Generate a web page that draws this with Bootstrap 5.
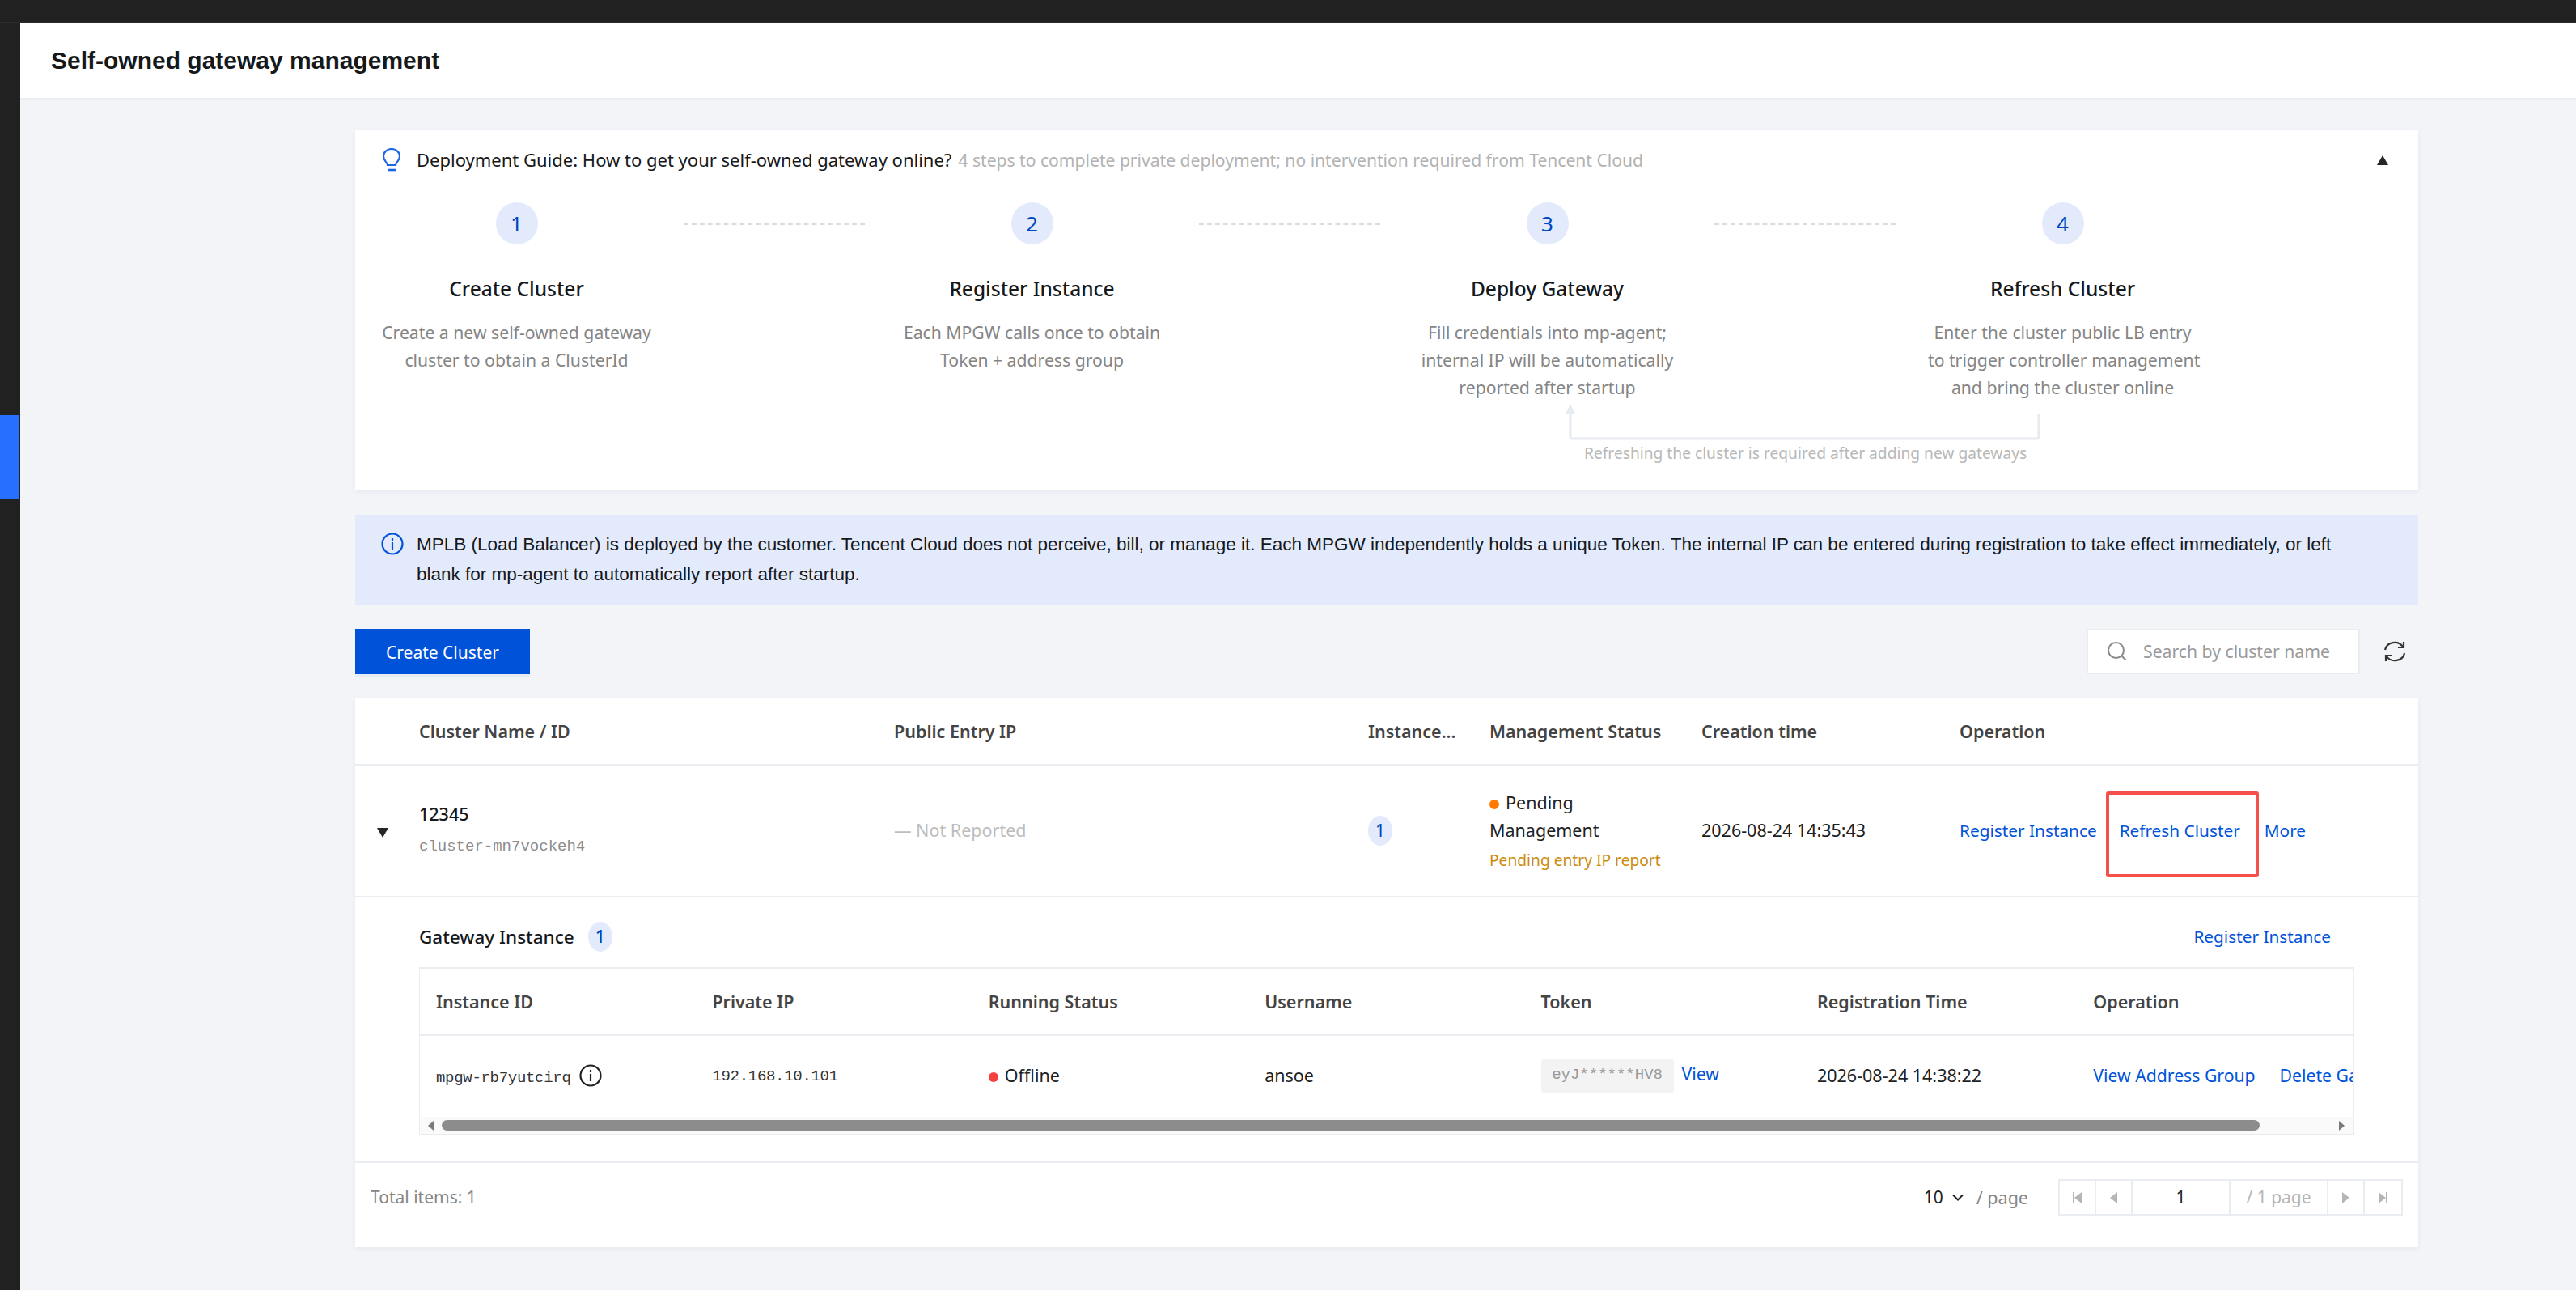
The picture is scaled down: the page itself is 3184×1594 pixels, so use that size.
<!doctype html>
<html lang="en"><head><meta charset="utf-8"><title>Self-owned gateway management</title>
<link rel="stylesheet" href="https://cdn.jsdelivr.net/npm/bootstrap@5.3.0/dist/css/bootstrap.min.css">
<style>
html,body{height:100%}
body{background:#f2f4f8;font-family:"Noto Sans",sans-serif;font-size:21px;color:#1f1f1f;overflow:hidden}
.top-strip{height:29px;background:#212121;border-bottom:2px solid #2b2b2b}
.shell{height:1565px}
.side-rail{width:25px;background:#212121;flex:none}
.side-mark{height:104px;margin-top:484px;background:#266fff;margin-right:1px}
.page-head{height:94px;background:#fff;border-bottom:2px solid #e9ecf1;padding-left:38px;font:700 30px "Liberation Sans",sans-serif;color:#16181a}
.page-body{padding:38px 195px 0 414px}
.guide{background:#fff;height:445px;box-shadow:0 2px 6px rgba(30,50,90,.06);padding-left:33px}
.guide-head{height:76px;padding-bottom:3px}
.guide-head svg{margin-right:19px}
.guide-title{color:#16181a;margin-right:8px;font-size:22px}
.guide-sub{color:#b3b3b3;font-size:21.1px}
.guide-caret{margin-left:auto;margin-right:37px;width:0;height:0;border-left:7.5px solid transparent;border-right:7.5px solid transparent;border-bottom:12px solid #262626}
.flow-step{width:333px;text-align:center;flex:none}
.flow-num{width:52px;height:52px;background:#e2eafc;color:#0046c0;font-size:26px;margin:13px auto 0}
.flow-title{font-size:24.5px;font-weight:500;color:#16181a;margin-top:36px;line-height:38px}
.flow-desc{color:#858585;font-size:21.2px;line-height:34px;margin-top:18px;white-space:nowrap}
.flow-dash{width:224px;flex:none;margin:39px 40px 0;border-top:2px dashed #dcdcdc;height:0}
.loop-wrap{margin-left:1461px;margin-top:3px}
.loop-note{font-size:19.2px;color:#b8b8b8;margin:2px 0 0 25px;line-height:26px;white-space:nowrap}
.notice{background:#e2eafc;height:111px;margin-top:30px;padding:18px 100px 0 32px;font:22.5px/37px "Liberation Sans",sans-serif;color:#16181a}
.notice svg{flex:none;margin-top:4px;margin-right:16px}
.tools{margin-top:30px;height:56px}
.make-btn{width:216px;height:56px;background:#0052d9;color:#fff;border:0;border-radius:0;font-size:21px;padding:3px 0 0;box-shadow:0 4px 0 #e8edf5}
.make-btn:hover{background:#0052d9;color:#fff}
.finder{width:338px;height:56px;background:#fff;border:2px solid #e9ecf1;padding-left:23px;color:#9a9a9a;font-size:21.2px}
.finder svg{margin-right:19px}
.reload{margin-left:28px;margin-right:14px}
.panel{background:#fff;margin-top:30px;box-shadow:0 2px 6px rgba(30,50,90,.06)}
.gw-table{table-layout:fixed;margin:0;width:100%;--bs-table-bg:transparent}
.gw-table th,.gw-table td{padding:0 20px;border-bottom:2px solid #e9ecf1;font-weight:400;vertical-align:middle;white-space:nowrap;color:#1f1f1f;font-size:21.5px}
.gw-table th{font-weight:600;color:#444;height:82px;padding-top:2px}
.c1{width:59px}.c2{width:587px}.c3{width:586px}.c4{width:150px}.c5{width:262px}.c6{width:319px}.c7{width:587px}
.row-main td{height:163px}
.tri-down{width:0;height:0;border-left:7.5px solid transparent;border-right:7.5px solid transparent;border-top:12px solid #262626;margin-left:7px;margin-top:4px}
.clu-name{font-weight:500;color:#16181a;line-height:30px;margin-bottom:14px;margin-top:-6px}
.mono-id{font:19px "Liberation Mono",monospace;color:#8c8c8c}
.faint{color:#bdbdbd!important}
.count-dot{width:30px;height:37px;border-radius:50%;background:#e2eafc;color:#0046c0;font-size:21px;line-height:37px;text-align:center}
.dot{width:12px;height:12px;border-radius:50%;margin-right:8px}
.dot-warn{background:#ff7a00}.dot-bad{background:#f54040}
.gw-table .status-cell{white-space:normal;line-height:34px;padding-top:2px}
.status-note{color:#cb8b10;font-size:19.2px;line-height:34px;margin-top:3px;white-space:nowrap}
.act,.gw-table .act{color:#0052d9;text-decoration:none;font-size:20.8px}
.act-gap{margin-left:28px}
.act-more{margin-left:30px}
.flagged{position:relative}
.flagged::after{content:"";position:absolute;left:-17px;right:-23px;top:-34px;height:106px;border:4px solid #f6504a;border-radius:3px}
.expand-td{background:#f6f8fc;padding:0!important}
.expand-in{height:326px;padding:30px 108px 0 79px}
.sub-title{height:37px;font-weight:500;font-size:22.5px;color:#16181a}
.sub-title .count-dot{margin-left:17px}
.sub-wrap{margin-top:19px;width:2391px;background:#fff;border:solid #e9ecf1;border-width:2px 1px 2px 1px;overflow:hidden;height:208px}
.sub-scroll{overflow:hidden;height:183px}
.sub-table{width:2731px;table-layout:fixed}
.sub-table col{width:341.4px}
.sub-table th{height:82px!important}
.sub-table td{height:101px;border-bottom:0;padding-bottom:2px}
.sub-table .act{font-size:21.2px}
.token{display:inline-block;width:164px;height:41px;background:#f3f3f3;border-radius:3px;color:#999;text-align:center;font:19px/39px "Liberation Mono",monospace;margin-right:10px;vertical-align:middle}
.mono-dark{font:19px "Liberation Mono",monospace;color:#333;letter-spacing:-.3px}
.mono-low{position:relative;top:-2px}
.info-i{margin-left:10px;vertical-align:-6px}
.bar{height:21px;background:#fafafa;padding:0 10px}
.bar-thumb{height:13px;border-radius:7px;background:#8c8c8c;margin:0 16px 0 10px;width:2247px;flex:none}
.bar-a{width:0;height:0;border-top:6px solid transparent;border-bottom:6px solid transparent}
.bar-l{border-right:7px solid #7a7a7a}.bar-r{border-left:7px solid #7a7a7a;margin-left:auto}
.del-link{margin-left:30px}
.foot-row{height:104px;padding:0 19px 18px}
.total{color:#858585;font-size:21px}
.size-sel{color:#1f1f1f;margin-left:auto}
.size-sel svg{margin:0 16px 4px 11px}
.page-word{color:#858585;margin-right:37px;font-size:21.5px}
.pager{height:46px;border:solid #e9ecf1;border-width:2px 2px 3px 2px;color:#b5b5b5}
.pg-b{width:45px;border-right:2px solid #e9ecf1;height:100%}
.pg-b:last-child{border-right:0}
.pg-input{width:121px;border-right:2px solid #e9ecf1;text-align:center;color:#1f1f1f;height:100%;line-height:40px}
.pg-of{width:121px;border-right:2px solid #e9ecf1;text-align:center;height:100%;line-height:40px}
.ink-l{width:0;height:0;border-top:7px solid transparent;border-bottom:7px solid transparent;border-right:9px solid #b5b5b5}
.ink-r{width:0;height:0;border-top:7px solid transparent;border-bottom:7px solid transparent;border-left:9px solid #b5b5b5}
.ink-s{width:2px;height:14px;background:#b5b5b5}
</style></head>
<body>
<div class="top-strip"></div>
<div class="shell d-flex">
  <aside class="side-rail"><div class="side-mark"></div></aside>
  <main class="flex-grow-1">
    <header class="page-head d-flex align-items-center">Self-owned gateway management</header>
    <div class="page-body">
      <section class="guide">
        <div class="guide-head d-flex align-items-center">
          <svg width="24" height="30" viewBox="0 0 24 30" fill="none" stroke="#1a66e0" stroke-width="2.2"><path d="M7 21c0-3-5-5-5-11a10 9 0 0 1 20 0c0 6-5 8-5 11z"/><path d="M7 27h10" stroke-width="2.6"/></svg>
          <span class="guide-title">Deployment Guide: How to get your self-owned gateway online?</span>
          <span class="guide-sub">4 steps to complete private deployment; no intervention required from Tencent Cloud</span>
          <span class="guide-caret"></span>
        </div>
        <div class="d-flex">
          <div class="flow-step"><div class="flow-num rounded-circle d-flex align-items-center justify-content-center">1</div><div class="flow-title">Create Cluster</div><div class="flow-desc">Create a new self-owned gateway<br>cluster to obtain a ClusterId</div></div>
          <div class="flow-dash"></div>
          <div class="flow-step"><div class="flow-num rounded-circle d-flex align-items-center justify-content-center">2</div><div class="flow-title">Register Instance</div><div class="flow-desc">Each MPGW calls once to obtain<br>Token + address group</div></div>
          <div class="flow-dash"></div>
          <div class="flow-step"><div class="flow-num rounded-circle d-flex align-items-center justify-content-center">3</div><div class="flow-title">Deploy Gateway</div><div class="flow-desc">Fill credentials into mp-agent;<br>internal IP will be automatically<br>reported after startup</div></div>
          <div class="flow-dash"></div>
          <div class="flow-step"><div class="flow-num rounded-circle d-flex align-items-center justify-content-center">4</div><div class="flow-title">Refresh Cluster</div><div class="flow-desc">Enter the cluster public LB entry<br>to trigger controller management<br>and bring the cluster online</div></div>
        </div>
        <div class="loop-wrap">
          <svg class="d-block" width="590" height="46" viewBox="-6 0 590 46" fill="none"><path d="M2 10V41a2 2 0 0 0 2 2H579a2 2 0 0 0 2-2V12" stroke="#e7eaef" stroke-width="3"/><path d="M2 0l-5.5 12h11z" fill="#e7eaef"/></svg>
          <div class="loop-note">Refreshing the cluster is required after adding new gateways</div>
        </div>
      </section>

      <div class="notice d-flex">
        <svg width="28" height="28" viewBox="0 0 28 28" fill="none" stroke="#0052d9" stroke-width="2.2"><circle cx="14" cy="14" r="12.5"/><path d="M14 12v9"/><path d="M14 7v3"/></svg>
        <div>MPLB (Load Balancer) is deployed by the customer. Tencent Cloud does not perceive, bill, or manage it. Each MPGW independently holds a unique Token. The internal IP can be entered during registration to take effect immediately, or left blank for mp-agent to automatically report after startup.</div>
      </div>

      <div class="tools d-flex align-items-center">
        <button class="btn make-btn" type="button">Create Cluster</button>
        <div class="finder d-flex align-items-center ms-auto">
          <svg width="26" height="26" viewBox="0 0 26 26" fill="none" stroke="#8a8a8a" stroke-width="2"><circle cx="11.5" cy="11.5" r="9.5"/><path d="M18.5 18.5l5 5"/></svg>
          <span>Search by cluster name</span>
        </div>
        <svg class="reload" width="30" height="28" viewBox="0 0 30 28" fill="none" stroke="#333" stroke-width="2.2"><path d="M3 12A12 11 0 0 1 25 8"/><path d="M26 2v7h-7"/><path d="M27 16A12 11 0 0 1 5 20"/><path d="M4 26v-7h7"/></svg>
      </div>

      <section class="panel">
        <table class="table gw-table">
          <colgroup><col class="c1"><col class="c2"><col class="c3"><col class="c4"><col class="c5"><col class="c6"><col class="c7"></colgroup>
          <thead><tr><th></th><th>Cluster Name / ID</th><th>Public Entry IP</th><th>Instance...</th><th>Management Status</th><th>Creation time</th><th>Operation</th></tr></thead>
          <tbody>
            <tr class="row-main">
              <td><div class="tri-down"></div></td>
              <td><div class="clu-name">12345</div><div class="mono-id">cluster-mn7vockeh4</div></td>
              <td class="faint">— Not Reported</td>
              <td><div class="count-dot">1</div></td>
              <td class="status-cell"><span class="dot dot-warn d-inline-block"></span>Pending<br>Management<div class="status-note">Pending entry IP report</div></td>
              <td>2026-08-24 14:35:43</td>
              <td><a class="act" href="#">Register Instance</a><a class="act act-gap flagged" href="#">Refresh Cluster</a><a class="act act-more" href="#">More</a></td>
            </tr>
            <tr>
              <td colspan="7" class="expand-td">
                <div class="expand-in">
                  <div class="sub-title d-flex align-items-center"><span>Gateway Instance</span><span class="count-dot">1</span><a class="act ms-auto fw-normal" href="#">Register Instance</a></div>
                  <div class="sub-wrap">
                    <div class="sub-scroll">
                      <table class="table gw-table sub-table">
                        <colgroup><col><col><col><col><col><col><col><col></colgroup>
                        <thead><tr><th>Instance ID</th><th>Private IP</th><th>Running Status</th><th>Username</th><th>Token</th><th>Registration Time</th><th>Operation</th><th></th></tr></thead>
                        <tbody><tr>
                          <td><span class="mono-dark">mpgw-rb7yutcirq</span><svg class="info-i" width="28" height="28" viewBox="0 0 28 28" fill="none" stroke="#222" stroke-width="2.2"><circle cx="14" cy="14" r="12.5"/><path d="M14 12v9"/><path d="M14 7v3"/></svg></td>
                          <td><span class="mono-dark mono-low">192.168.10.101</span></td>
                          <td><span class="dot dot-bad d-inline-block"></span>Offline</td>
                          <td>ansoe</td>
                          <td><span class="token">eyJ******HV8</span><a class="act" href="#">View</a></td>
                          <td>2026-08-24 14:38:22</td>
                          <td colspan="2"><a class="act" href="#">View Address Group</a><a class="act del-link" href="#">Delete Gateway</a></td>
                        </tr></tbody>
                      </table>
                    </div>
                    <div class="bar d-flex align-items-center"><span class="bar-a bar-l"></span><span class="bar-thumb"></span><span class="bar-a bar-r"></span></div>
                  </div>
                </div>
              </td>
            </tr>
          </tbody>
        </table>
        <div class="foot-row d-flex align-items-center">
          <span class="total">Total items: 1</span>
          <span class="size-sel">10<svg width="14" height="10" viewBox="0 0 14 10" fill="none" stroke="#222" stroke-width="2"><path d="M1 1.5l6 6 6-6"/></svg></span>
          <span class="page-word">/ page</span>
          <div class="pager d-flex align-items-center">
            <div class="pg-b d-flex align-items-center justify-content-center"><span class="ink-s"></span><span class="ink-l"></span></div>
            <div class="pg-b d-flex align-items-center justify-content-center"><span class="ink-l"></span></div>
            <div class="pg-input">1</div>
            <div class="pg-of">/ 1 page</div>
            <div class="pg-b d-flex align-items-center justify-content-center"><span class="ink-r"></span></div>
            <div class="pg-b d-flex align-items-center justify-content-center"><span class="ink-r"></span><span class="ink-s"></span></div>
          </div>
        </div>
      </section>
    </div>
  </main>
</div>
<script src="https://cdn.jsdelivr.net/npm/bootstrap@5.3.0/dist/js/bootstrap.bundle.min.js"></script>
</body></html>
